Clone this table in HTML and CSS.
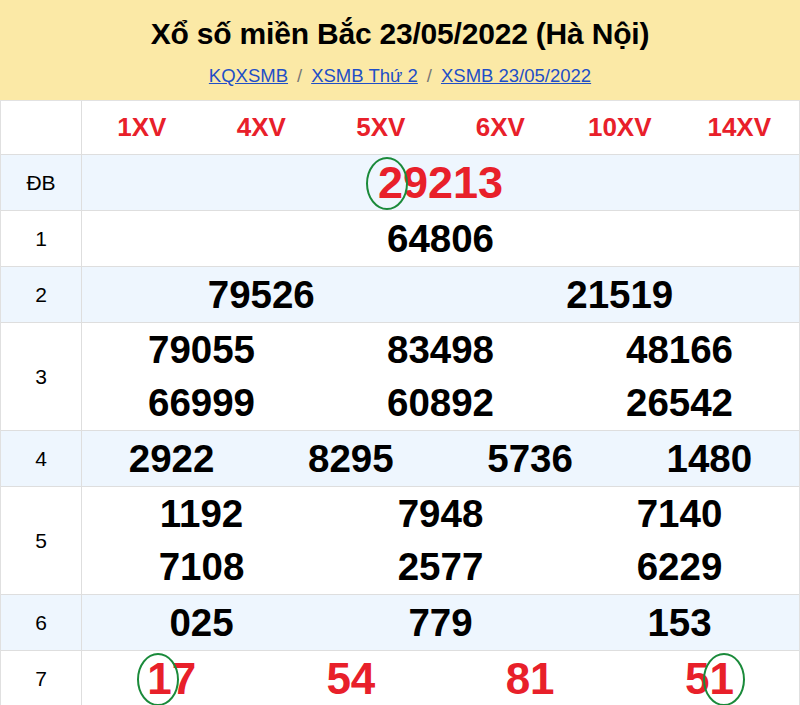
FILE: index.html
```html
<!DOCTYPE html>
<html lang="vi">
<head>
<meta charset="utf-8">
<title>XSMB 23/05/2022</title>
<link rel="stylesheet" href="styles.css">
</head>
<body>
<div class="header">
  <h1 class="title">Xổ số miền Bắc 23/05/2022 (Hà Nội)</h1>
  <div class="crumbs">
    <a href="#">KQXSMB</a><span class="sep">/</span><a href="#">XSMB Thứ 2</a><span class="sep">/</span><a href="#">XSMB 23/05/2022</a>
  </div>
</div>
<div class="board">
  <div class="row codes">
    <div class="label"></div>
    <div class="cells c6">
      <span>1XV</span><span>4XV</span><span>5XV</span><span>6XV</span><span>10XV</span><span>14XV</span>
    </div>
  </div>
  <div class="row alt">
    <div class="label">ĐB</div>
    <div class="cells c1 special">
      <span><span class="mark mark-db">2</span>9213</span>
    </div>
  </div>
  <div class="row">
    <div class="label">1</div>
    <div class="cells c1"><span>64806</span></div>
  </div>
  <div class="row alt">
    <div class="label">2</div>
    <div class="cells c2"><span>79526</span><span>21519</span></div>
  </div>
  <div class="row double">
    <div class="label">3</div>
    <div class="cells c3">
      <span>79055</span><span>83498</span><span>48166</span>
      <span>66999</span><span>60892</span><span>26542</span>
    </div>
  </div>
  <div class="row alt">
    <div class="label">4</div>
    <div class="cells c4"><span>2922</span><span>8295</span><span>5736</span><span>1480</span></div>
  </div>
  <div class="row double">
    <div class="label">5</div>
    <div class="cells c3">
      <span>1192</span><span>7948</span><span>7140</span>
      <span>7108</span><span>2577</span><span>6229</span>
    </div>
  </div>
  <div class="row alt">
    <div class="label">6</div>
    <div class="cells c3"><span>025</span><span>779</span><span>153</span></div>
  </div>
  <div class="row">
    <div class="label">7</div>
    <div class="cells c4 last">
      <span><span class="mark mark-left">1</span>7</span><span>54</span><span>81</span><span>5<span class="mark">1</span></span>
    </div>
  </div>
</div>
</body>
</html>
```

FILE: styles.css
```css
* { box-sizing: border-box; }
html, body { margin: 0; padding: 0; background: #fff; }
body {
  font-family: "Liberation Sans", Arial, sans-serif;
  color: #000;
  width: 800px;
  overflow: hidden;
}
.header {
  background: #fbe9a6;
  height: 101px;
  border-bottom: 1px solid #e2e2e2;
  text-align: center;
  padding-top: 15px;
}
.title {
  margin: 0;
  font-size: 30px;
  font-weight: bold;
  line-height: 38px;
  letter-spacing: -0.2px;
}
.crumbs {
  margin-top: 12px;
  font-size: 18.5px;
  line-height: 22px;
}
.crumbs a { color: #1f4fc6; text-decoration: underline; }
.crumbs .sep { color: #777; margin: 0 9px; }

.board {
  border-left: 1px solid #e0e0e0;
  border-right: 1px solid #e0e0e0;
}
.row {
  display: flex;
  height: 56px;
  border-bottom: 1px solid #dedede;
}
.row.codes { height: 54px; }
.row.double { height: 108px; }
.row.alt { background: #eef6fe; }
.label {
  width: 81px;
  flex: none;
  border-right: 1px solid #dedede;
  display: flex;
  align-items: center;
  justify-content: center;
  font-size: 21px;
  background: #fff;
}
.row.alt .label { background: #eef6fe; }
.cells {
  flex: 1;
  display: grid;
  align-items: center;
  justify-items: center;
  font-size: 38.5px;
  font-weight: bold;
}
.c1 { grid-template-columns: 1fr; }
.c2 { grid-template-columns: repeat(2, 1fr); }
.c3 { grid-template-columns: repeat(3, 1fr); }
.c4 { grid-template-columns: repeat(4, 1fr); }
.c6 { grid-template-columns: repeat(6, 1fr); }
.codes .cells {
  color: #e8202a;
  font-size: 26px;
}
.special { color: #e8202a; font-size: 45px; }
.last { color: #e8202a; font-size: 44px; }
.mark { position: relative; }
.mark::after {
  content: "";
  position: absolute;
  left: 50%;
  top: 50%;
  width: 38px;
  height: 49px;
  margin-left: -19px;
  margin-top: -25px;
  border: 2px solid #1a8a3a;
  border-radius: 50%;
}
.mark-db::after { margin-left: -24px; }
.mark-left::after { margin-left: -22px; }
```
